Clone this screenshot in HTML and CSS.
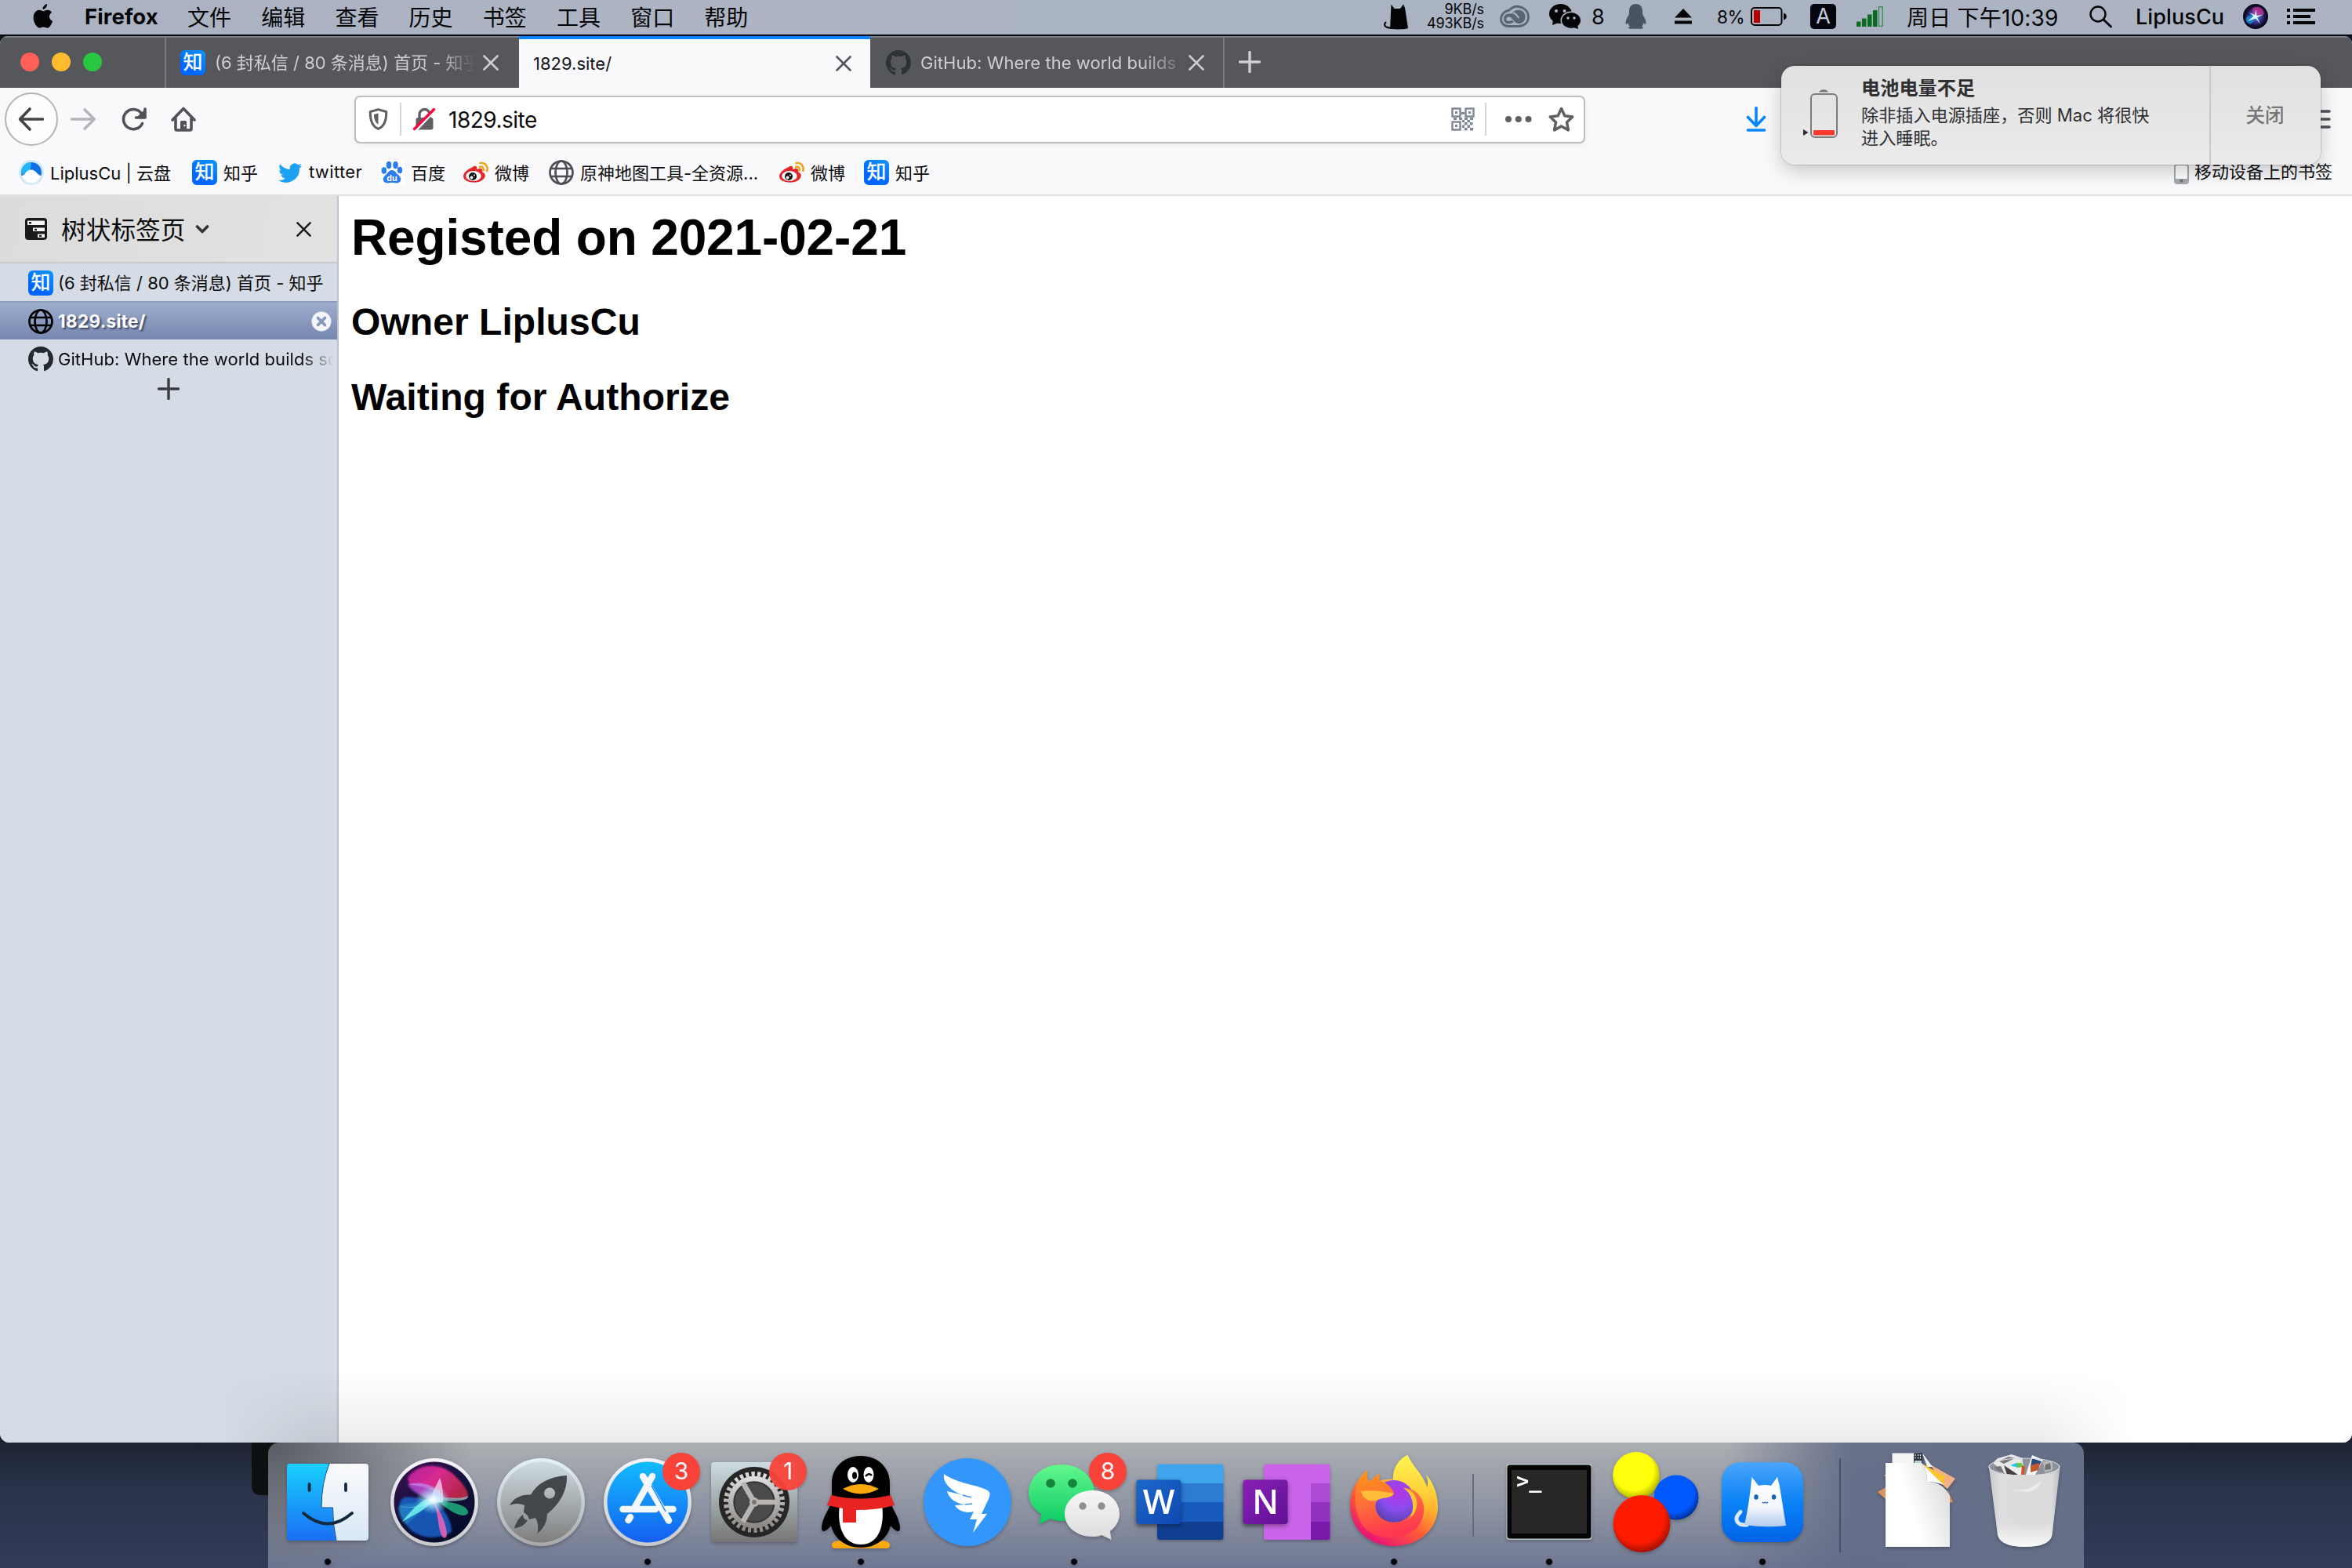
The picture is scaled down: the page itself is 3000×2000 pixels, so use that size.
FILE: index.html
```html
<!DOCTYPE html>
<html lang="zh-CN">
<head>
<meta charset="utf-8">
<title>1829.site/</title>
<link rel="stylesheet" href="styles.css">
</head>
<body>
<svg class="defs" width="0" height="0" aria-hidden="true">
  <defs>
    <symbol id="close" viewBox="0 0 20 20"><path d="M1.500 1.500L18.500 18.500M18.500 1.500L1.500 18.500" fill="none" stroke="currentColor" stroke-width="2.600" stroke-linecap="round"/></symbol>
    <symbol id="plus" viewBox="0 0 28 28"><path d="M14 1.500V26.500M1.500 14H26.500" fill="none" stroke="currentColor" stroke-width="3.400" stroke-linecap="round"/></symbol>
    <symbol id="github" viewBox="0 0 16 16"><path fill="currentColor" d="M8 0C3.580 0 0 3.580 0 8c0 3.540 2.290 6.530 5.470 7.590.4.070.550-.170.550-.380 0-.190-.010-.820-.010-1.490-2.010.370-2.530-.490-2.690-.940-.090-.230-.480-.940-.820-1.130-.280-.150-.680-.520-.010-.530.630-.010 1.080.580 1.230.820.720 1.210 1.870.870 2.330.660.070-.520.280-.870.510-1.070-1.780-.2-3.640-.890-3.640-3.950 0-.870.310-1.590.820-2.150-.080-.2-.360-1.020.080-2.120 0 0 .670-.210 2.200.820.640-.180 1.320-.270 2-.270s1.360.090 2 .270c1.530-1.040 2.200-.820 2.200-.820.440 1.100.160 1.920.080 2.120.510.560.820 1.270.820 2.150 0 3.070-1.870 3.750-3.650 3.950.290.250.540.730.540 1.480 0 1.070-.010 1.930-.010 2.200 0 .210.150.460.550.380A8.010 8.010 0 0 0 16 8c0-4.420-3.580-8-8-8z"/></symbol>
    <symbol id="globe" viewBox="0 0 32 32"><g fill="none" stroke="currentColor" stroke-width="2.700"><circle cx="16" cy="16" r="14.500"/><ellipse cx="16" cy="16" rx="7.500" ry="14.500"/><path d="M3 11H29M3 21H29"/></g></symbol>
    <symbol id="weibo" viewBox="0 0 32 32">
      <path fill="#e6252b" d="M11 9.500c3-2.300 6.500-2.500 6.300 1.200 0 .8-.1 1-.3 1.500 3.500-1.700 6.800-1.400 7.300.8.200.9 0 1.700-.3 2.500 2.500.7 3.800 2.400 3.800 4.600 0 4.700-6.300 8.700-13.800 8.700C6.500 28.800 0 26 0 20.800 0 16.500 6 11.500 11 9.500z"/>
      <ellipse cx="13" cy="20.500" rx="9.800" ry="6.400" fill="#fff"/><circle cx="12" cy="21" r="5" fill="#111"/><circle cx="10.500" cy="22.500" r="1.900" fill="#fff"/><circle cx="14" cy="19.500" r="1" fill="#fff"/>
      <path d="M21.500 4c5.500-1.300 10.500 3.800 8.800 10M21 8.800c3-.8 5.300 1.600 4.600 4.400" fill="none" stroke="#f7a21b" stroke-width="2.600" stroke-linecap="round"/>
    </symbol>
    <radialGradient id="siriBg"><stop offset="0" stop-color="#48a7d6"/><stop offset=".5" stop-color="#3b3c9c"/><stop offset=".85" stop-color="#1b1446"/><stop offset="1" stop-color="#0a0722"/></radialGradient>
  </defs>
</svg>

<header class="menubar">
  <svg class="apple" viewBox="0 0 26 32"><path fill="#050507" d="M18.200 0c.2 2.700-2.200 6.900-5.700 7C12 4 15.300.4 18.200 0zM13.300 9.200c1.100 0 3-1.500 5.400-1.400 2.200.1 4.100 1.100 5.400 2.900-4.600 2.900-3.900 9.300 1 11.300-1 2.900-3.600 8.700-6.500 8.700-1.900 0-2.800-1.200-5.100-1.200s-3.300 1.200-5 1.200C4.700 30.700.6 23.400.6 17.600c0-6.500 4-9.800 7.600-9.800 2.200 0 3.900 1.400 5.100 1.400z"/></svg>
  <b class="app">Firefox</b>
  <nav class="menus"><span>文件</span><span>编辑</span><span>查看</span><span>历史</span><span>书签</span><span>工具</span><span>窗口</span><span>帮助</span></nav>
  <div class="status">
    <svg class="s-cat" viewBox="0 0 32 32"><path fill="#050507" d="M9 32 10.500 0.500 14.500 6H22L26 .5 28 5 32 31C26 33 14 32.500 9 32z"/><path d="M4 23c-3.500 3-2.500 7.500 6 7.500" fill="none" stroke="#050507" stroke-width="2"/></svg>
    <div class="net"><span>9KB/s</span><span>493KB/s</span></div>
    <svg class="s-cc" viewBox="0 0 38 28"><path d="M12 6C18 0 24 .5 29 3c5 2.500 7.500 7 7.500 11.500C36.500 22 31 26.500 24 26.500H11C5.500 26.500 1.500 22.500 1.500 17.500 1.500 11.500 6 7 12 6z" fill="none" stroke="#5b6473" stroke-width="2.800"/><path fill="#5b6473" d="M15 10.500C20 3 32.500 4.500 32.500 14.500 32.500 20 29 23 24 23c-2.500 0-4.500-1.500-6.500-4-2-2.600-3.500-4.500-6-4.500-4 0-4.500 5.500 0 5.500 2 0 3-.8 4-1.500l2.300 2.800C16 22.500 14 23.200 11 23.200 3 23.200 3 10.500 11.500 10.500z"/><path d="M17.500 9.500c3 .5 4.500 3.500 6.500 6" fill="none" stroke="#adb5c4" stroke-width="2" stroke-linecap="round"/></svg>
    <svg class="s-wx" viewBox="0 0 40 32"><ellipse cx="14.500" cy="12.500" rx="14.500" ry="12.500" fill="#050507"/><path fill="#050507" d="M5 20 4 27l8-3z"/><ellipse cx="28" cy="21" rx="13.500" ry="11.500" fill="#adb5c4"/><ellipse cx="28" cy="21" rx="12" ry="10" fill="#050507"/><path fill="#050507" d="M31 30l6 2-1-6z"/><g fill="#adb5c4"><circle cx="9" cy="9" r="2"/><circle cx="19.500" cy="9" r="2"/><circle cx="24" cy="18" r="1.700"/><circle cx="32" cy="18" r="1.700"/></g></svg>
    <span class="s-count">8</span>
    <svg class="s-qq" viewBox="0 0 26 32"><path fill="#4a5361" d="M13 0c6 0 8.500 4.500 8.500 9 0 2 0 3 .5 5 2 3 4 7 4 10.500-.3 2.500-2 1-3-.5-.5 2-1.200 3.500-2.500 4.800 3 1.400 2 3-1.500 3H7c-3.500 0-4.500-1.600-1.500-3C4.200 27.500 3.500 26 3 24c-1 1.500-2.700 3-3 .5C0 21 2 17 4 14c.5-2 .5-3 .5-5C4.500 4.500 7 0 13 0z"/></svg>
    <svg class="s-eject" viewBox="0 0 22 20"><path fill="#050507" d="M11 0 22 11.500H0zM0 15.500H22V19.500H0z"/></svg>
    <span class="s-pct">8%</span>
    <svg class="s-bat" viewBox="0 0 46 24"><rect x="1" y="1" width="38.500" height="22" rx="4" fill="none" stroke="#050507" stroke-width="2"/><rect x="4" y="4" width="8" height="16" fill="#b80000"/><path fill="#050507" d="M42 7.500c5 1 5 8 0 9z"/></svg>
    <span class="s-ime">A</span>
    <svg class="s-sig" viewBox="0 0 34 26"><g fill="#0b6b22"><rect x="0" y="19.500" width="5.500" height="6.500"/><rect x="7" y="15.500" width="5.500" height="10.500"/><rect x="14" y="10.500" width="5.500" height="15.500"/><rect x="21" y="5" width="5.500" height="21"/></g><rect x="28.500" y=".8" width="4.700" height="24.500" fill="none" stroke="#2c8446" stroke-width="1.200"/></svg>
    <span class="s-clock">周日 下午10:39</span>
    <svg class="s-find" viewBox="0 0 30 28"><circle cx="11" cy="11" r="9.500" fill="none" stroke="#050507" stroke-width="2.400"/><path d="M18 18l9.500 9" stroke="#050507" stroke-width="3" stroke-linecap="round"/></svg>
    <span class="s-user">LiplusCu</span>
    <svg class="s-siri" viewBox="0 0 32 32"><circle cx="16" cy="16" r="16" fill="#0b0820"/><circle cx="16" cy="16" r="14" fill="url(#siriBg)"/><path fill="#e0359a" opacity=".65" d="M16 16C8 8 12 3 20 4c5 1 8 6 6 10-3 2-7 1-10 2z"/><path fill="#1b8fe0" opacity=".8" d="M16 16C8 12 2 16 4 22c3 5 8 6 12-6z"/><path fill="#d9fbff" d="M16.500 7l1 8 8-1-7.500 3.200 4 8-6-6.700L6 22l7.500-6.500L8 11l7 3z"/></svg>
    <svg class="s-list" viewBox="0 0 36 20"><path fill="#050507" d="M0 0H4V4H0zM0 8H4V12H0zM0 16H4V20H0zM8 0H36V4H8zM8 8H30V12H8zM8 16H36V20H8z"/></svg>
  </div>
</header>

<main class="window">
  <div class="titlebar">
    <div class="lights"><i class="red"></i><i class="yellow"></i><i class="green"></i></div>
    <div class="tab tab-a"><span class="zhi">知</span><span class="label">(6 封私信 / 80 条消息) 首页 - 知乎</span><svg class="x"><use href="#close"/></svg></div>
    <div class="tab tab-b"><span class="label">1829.site/</span><svg class="x"><use href="#close"/></svg></div>
    <div class="tab tab-c"><svg class="fav"><use href="#github"/></svg><span class="label">GitHub: Where the world builds software</span><svg class="x"><use href="#close"/></svg></div>
    <svg class="newtab"><use href="#plus"/></svg>
  </div>

  <div class="toolbar">
    <span class="back"><svg width="34" height="30" viewBox="0 0 34 30"><path d="M31.500 15H3M15 2 2.500 15 15 28" fill="none" stroke="#444448" stroke-width="3.600" stroke-linecap="round" stroke-linejoin="round"/></svg></span>
    <svg class="fwd" viewBox="0 0 32 28"><path d="M1.500 14H30M18 1.800 30.200 14 18 26.200" fill="none" stroke="#b5b5b9" stroke-width="3.400" stroke-linecap="round" stroke-linejoin="round"/></svg>
    <svg class="reload" viewBox="0 0 32 30"><path d="M26.500 20.500A12.600 12.600 0 1 1 25.500 8" fill="none" stroke="#515156" stroke-width="3.600" stroke-linecap="round"/><path d="M30 2V13H18.500" fill="none" stroke="#515156" stroke-width="3.600" stroke-linecap="round" stroke-linejoin="round"/><path fill="#515156" d="M29 3V12H20z"/></svg>
    <svg class="home" viewBox="0 0 32 32"><path d="M2 17 16 2.500 30 17M6 15V28.500Q6 30 7.500 30H24.500Q26 30 26 28.500V15" fill="none" stroke="#515156" stroke-width="3.600" stroke-linecap="round" stroke-linejoin="round"/><path fill="#515156" d="M12 30V19.500Q12 18 13.500 18H18.500Q20 18 20 19.500V30z"/><rect x="16.500" y="23" width="1.800" height="2.200" fill="#f9f9fb"/></svg>
    <div class="urlbar">
      <svg class="shield" viewBox="0 0 24 28"><path d="M12 1.600 22.200 4.500C22.500 15 20 23 12 26.400 4 23 1.500 15 1.800 4.500z" fill="none" stroke="#606064" stroke-width="3" stroke-linejoin="round"/><path fill="#606064" d="M12 6.500V21C8 18 6.500 14 6.500 8z"/></svg>
      <i class="rule"></i>
      <svg class="lock" viewBox="0 0 28 28"><path d="M8 14V8a6.500 6.500 0 0 1 13 0V14" fill="none" stroke="#606064" stroke-width="3.400"/><rect x="3.500" y="12" width="22" height="15.500" rx="3" fill="#606064"/><path d="M3.500 28.500 29 1.500" stroke="#fff" stroke-width="3"/><path d="M1.500 26.500 26.500 1.500" stroke="#f8043f" stroke-width="3.400" stroke-linecap="round"/></svg>
      <span class="url">1829.site</span>
      <svg class="qr" viewBox="0 0 30 30"><g fill="none" stroke="#7d8794" stroke-width="2.400"><rect x="1.500" y="1.500" width="10" height="10"/><rect x="18.500" y="1.500" width="10" height="10"/><rect x="1.500" y="18.500" width="10" height="10"/></g><path fill="#7d8794" d="M5 5h3v3H5zM22 5h3v3h-3zM5 22h3v3H5zM13 6h4v3h-4zM3 13h4v3H3zM10 13h4v3h-4zM17 13h4v3h-4zM24 13h4v3h-4zM14 16h3v3h-3zM20.500 16h3.500v3h-3.500zM17 19h3.500v3.500H17zM24 19h3.500v3.500H24zM14 22.500h3v3.500h-3zM20.500 22.500H24V26h-3.500zM17 26h3.500v3.500H17zM24 26h4v3.500h-4z"/></svg>
      <i class="rule"></i>
      <svg class="dots" viewBox="0 0 34 8"><g fill="#606064"><circle cx="4" cy="4" r="4"/><circle cx="16.800" cy="4" r="4"/><circle cx="29.500" cy="4" r="4"/></g></svg>
      <svg class="star" viewBox="0 0 32 32"><path d="M16 2.500 20.200 11.300 29.800 12.600 22.800 19.300 24.600 29 16 24.300 7.400 29 9.200 19.300 2.200 12.600 11.800 11.300z" fill="none" stroke="#606064" stroke-width="3.400" stroke-linejoin="round"/></svg>
    </div>
    <svg class="down" viewBox="0 0 26 32"><path d="M13 1.500V24M2.500 13.500 13 24.500 23.500 13.500M2.500 30H23.500" fill="none" stroke="#0a84ff" stroke-width="3.600" stroke-linecap="round" stroke-linejoin="round"/></svg>
    <svg class="burger" viewBox="0 0 28 24"><path d="M2 2H26M2 12H26M2 22H26" stroke="#515156" stroke-width="3.600" stroke-linecap="round"/></svg>
  </div>

  <div class="bookmarks">
    <a style="width:221px"><svg viewBox="0 0 32 32"><circle cx="16" cy="16" r="16" fill="#cfe9f8"/><circle cx="16" cy="16" r="13" fill="#0e6fe8"/><path fill="#23b6f5" d="M3 18C3 8 9 2.500 16 3c-1 5 0 9-4 13z"/><path fill="#fff" d="M3.500 20C8 20 9 12.500 15.500 12.500 22 12.500 24 20 28.500 20 26 27 21 29.500 16 29.500S5.500 26.500 3.500 20z"/></svg><span>LiplusCu | 云盘</span></a>
    <a style="width:109px"><span class="zhi">知</span><span>知乎</span></a>
    <a style="width:130px"><svg viewBox="0 0 32 32"><path fill="#1da1f2" d="M31 7.200c-1.100.5-2.300.8-3.500 1 1.300-.8 2.200-2 2.700-3.400-1.200.7-2.500 1.200-3.900 1.500A6.200 6.200 0 0 0 15.800 12C10.700 11.700 6.200 9.300 3.100 5.500c-1.600 2.800-.8 6.400 1.900 8.200-1 0-2-.3-2.800-.8 0 2.900 2 5.500 4.900 6.200-.9.200-1.800.3-2.700.1.800 2.500 3 4.200 5.700 4.300A12.400 12.400 0 0 1 1 26a17.500 17.500 0 0 0 27-15.600c1.200-.9 2.200-2 3-3.200z"/></svg><span class="tw">twitter</span></a>
    <a style="width:107px"><svg viewBox="0 0 32 32"><path fill="#fff" d="M0 0H32V32H0z"/><g fill="#2b7cf0"><ellipse cx="12" cy="6.500" rx="3.300" ry="4.700"/><ellipse cx="20.500" cy="6.500" rx="3.300" ry="4.700"/><ellipse cx="5.800" cy="13.500" rx="3.200" ry="4.200"/><ellipse cx="26" cy="13" rx="3.200" ry="4.200"/><path d="M16 13c4 0 5 4 8 6 5.500 4.500 3.500 10.500-2 10.500-2.500 0-3.500-.5-6-.5s-3.500.5-6 .5C4.500 29.500 2.500 23.500 8 19c3-2.500 4-6 8-6z"/></g><text x="16" y="27" class="du">du</text></svg><span>百度</span></a>
    <a style="width:109px"><svg><use href="#weibo"/></svg><span>微博</span></a>
    <a style="width:294px" class="gray"><svg><use href="#globe"/></svg><span>原神地图工具-全资源...</span></a>
    <a style="width:108px"><svg><use href="#weibo"/></svg><span>微博</span></a>
    <a style="width:108px"><span class="zhi">知</span><span>知乎</span></a>
    <a class="mobile"><svg viewBox="0 0 19 26"><rect x="1" y="1" width="17" height="24" rx="3" fill="#fff" stroke="#a3a9b0" stroke-width="2"/><path fill="#a3a9b0" d="M1 19H18V25H1z"/><rect x="7.500" y="20" width="4" height="3.500" fill="#6c7278"/></svg><span>移动设备上的书签</span></a>
  </div>

  <div class="body">
    <aside class="sidebar">
      <div class="side-head">
        <svg class="tree" viewBox="0 0 28 28"><rect width="28" height="28" rx="4" fill="#1a1a1a"/><path fill="#f4f4f4" d="M3 3.500H25V9H3zM10 12.500H25V17H10zM16 20.500H25V25H16z"/><path fill="#1a1a1a" d="M5 5h3v2.500H5zM12 13.700h3v2.200h-3zM18 21.700h3v2.200h-3z"/></svg>
        <span>树状标签页</span>
        <svg class="chev" viewBox="0 0 18 11"><path d="M2.500 2 9 8.500 15.500 2" fill="none" stroke="#333" stroke-width="3.600" stroke-linecap="round" stroke-linejoin="round"/></svg>
        <svg class="side-x"><use href="#close"/></svg>
      </div>
      <div class="row"><span class="zhi">知</span><span class="txt zh">(6 封私信 / 80 条消息) 首页 - 知乎</span></div>
      <div class="row current"><svg class="fav"><use href="#globe"/></svg><b class="txt">1829.site/</b><svg class="pill" viewBox="0 0 26 26"><circle cx="13" cy="13" r="12.500" fill="#f3f5fa"/><path d="M8.500 8.500 17.500 17.500M17.500 8.500 8.500 17.500" stroke="#8796bb" stroke-width="3.600" stroke-linecap="round"/></svg></div>
      <div class="row last"><svg class="fav"><use href="#github"/></svg><span class="txt fade">GitHub: Where the world builds software</span></div>
      <div class="add"><svg><use href="#plus"/></svg></div>
    </aside>
    <article class="page">
      <h1>Registed on 2021-02-21</h1>
      <h2>Owner LiplusCu</h2>
      <h2>Waiting for Authorize</h2>
    </article>
  </div>
  <div class="dock-shade"></div>
</main>

<section class="notice">
  <svg class="n-bat" viewBox="0 0 46 64"><path fill="#7c7c7e" d="M21 4.500C22 0 32 0 33 4.500z"/><rect x="11" y="7" width="33" height="55" rx="5" fill="none" stroke="#7c7c7e" stroke-width="2"/><rect x="14" y="53" width="27" height="6.500" rx="1" fill="#fb3b2b"/><path fill="#2b2b2b" d="M1 52 7.500 56 1 60z"/></svg>
  <div class="n-text"><strong>电池电量不足</strong><p>除非插入电源插座，否则 Mac 将很快<br>进入睡眠。</p></div>
  <div class="n-close">关闭</div>
</section>

<div class="behind"></div>
<footer class="dock">
  <svg class="on" viewBox="0 0 136 160">
    <defs><linearGradient id="fb" x2="0" y2="1"><stop stop-color="#18d0ff"/><stop offset="1" stop-color="#1a6ef5"/></linearGradient><linearGradient id="fw" x2="0" y2="1"><stop stop-color="#fafafc"/><stop offset="1" stop-color="#d9e8f6"/></linearGradient></defs>
    <rect x="16" y="27" width="104" height="98" rx="4" fill="url(#fb)"/><path fill="url(#fw)" d="M70 27H116Q120 27 120 31V121Q120 125 116 125H79Q74.500 105 74.500 83H60Q60 52 70 27z"/><path d="M70 27Q60 52 60 83H74.500Q74.500 105 79 125" fill="none" stroke="#1e4f88" stroke-width="1"/><path d="M44.600 53V61M91 53V61M37 90Q68 117 99 90" fill="none" stroke="#13293f" stroke-width="3.800" stroke-linecap="round"/>
  </svg>
  <svg viewBox="0 0 136 160">
    <defs><radialGradient id="sg"><stop stop-color="#fff"/><stop offset=".3" stop-color="#cff6ff" stop-opacity=".85"/><stop offset="1" stop-color="#8ef" stop-opacity="0"/></radialGradient><linearGradient id="ring" x2="0" y2="1"><stop stop-color="#f6f4f8"/><stop offset="1" stop-color="#c9c9cc"/></linearGradient><linearGradient id="sm" x2=".6" y2="1"><stop stop-color="#42104f"/><stop offset=".5" stop-color="#161240"/><stop offset="1" stop-color="#050c2a"/></linearGradient>
    <linearGradient id="s1" x2="1" y2=".5"><stop stop-color="#b0219c"/><stop offset=".5" stop-color="#d92a92"/><stop offset="1" stop-color="#b32847"/></linearGradient>
    <filter id="soft"><feGaussianBlur stdDeviation="1.300"/></filter></defs>
    <circle cx="68" cy="76" r="56" fill="url(#ring)"/><circle cx="68" cy="76" r="51.500" fill="url(#sm)"/>
    <g filter="url(#soft)"><path fill="url(#s1)" d="M66 73C46 66 26 50 38 40c16-16 44-12 58 4 14 14 20 26 10 28z"/><path fill="#1a5cc0" opacity=".9" d="M66 73C44 74 20 58 24 88c6 22 22 32 40 33 12 0 24-4 26-8 0-14-10-30-24-40z"/><path fill="#2fa6d8" opacity=".45" d="M66 73C50 78 30 76 22 82c0 10 4 18 10 22 12-10 24-20 34-31z"/><path fill="#a04fd0" opacity=".75" d="M66 74C54 70 40 64 34 54c14-6 34-2 48 18z"/></g>
    <path fill="#d7a6ea" opacity=".45" d="M34 54C50 48 72 54 82 72 72 62 52 54 34 54z"/>
    <path fill="#9fe8e0" opacity=".6" d="M22 80C36 86 54 80 66 71 80 68 100 74 111 68 112 74 98 75 84 75 60 78 36 88 22 80z"/>
    <path fill="#1fae7c" opacity=".85" d="M72 74C92 76 112 80 111 90c-6 9-26-4-39-16z"/><path fill="#f263b4" opacity=".85" d="M66 74C74 90 72 112 79 121c5 3 6-4 4-12C79 94 74 84 66 74z"/><path fill="#6ff5ef" opacity=".85" d="M27 101C42 82 54 70 70 70 58 86 42 92 27 101z"/><path fill="#ffd6f2" opacity=".75" d="M60 76 75 45Q80 58 79 76z"/><ellipse cx="66" cy="73" rx="22" ry="18" fill="url(#sg)"/>
  </svg>
  <svg viewBox="0 0 136 160">
    <defs><linearGradient id="lp" x2="0" y2="1"><stop stop-color="#cfdde2"/><stop offset="1" stop-color="#7e7e7e"/></linearGradient><linearGradient id="lr" x2="0" y2="1"><stop stop-color="#e4f3f8"/><stop offset="1" stop-color="#a8a8a8"/></linearGradient></defs>
    <circle cx="68" cy="76" r="56" fill="url(#lr)"/><circle cx="68" cy="76" r="51.500" fill="url(#lp)"/><path fill="#43464a" fill-rule="evenodd" d="M101 42Q102 70 76 91Q76 106 63.500 116Q66 104 61 96L53 98 51 93 46 89 47 80Q38 76 28 80Q36 66 55 66.500Q68 44 101 42zM79 57.500a7 7 0 1 0 .1 0zM45 92Q45 98 51 99Q46 108 34 109.500Q37 98 45 92z"/>
  </svg>
  <svg class="on" viewBox="0 0 136 160">
    <defs><linearGradient id="as" x2="0" y2="1"><stop stop-color="#12bcff"/><stop offset="1" stop-color="#155ff0"/></linearGradient></defs>
    <circle cx="68" cy="76" r="56" fill="url(#ring)"/><circle cx="68" cy="76" r="51.500" fill="url(#as)"/><g stroke="#f4f7fb" stroke-width="8.500" stroke-linecap="round"><path d="M36.500 85H78M90 85H100.500M74 43 52 82M62 43 95 99.500M46 95 43.500 99"/></g><path d="M73 55 91 88" stroke="#1588f8" stroke-width="1.500"/>
    <circle cx="111" cy="37" r="24" fill="#f9433a"/><text x="111" y="46.500" class="badge">3</text>
  </svg>
  <svg viewBox="0 0 136 160">
    <defs><linearGradient id="sp" x2="0" y2="1"><stop stop-color="#cddce1"/><stop offset="1" stop-color="#767676"/></linearGradient><linearGradient id="gr" x2="0" y2="1"><stop stop-color="#dcdcdc"/><stop offset="1" stop-color="#8e8a86"/></linearGradient></defs>
    <rect x="13" y="25" width="110" height="102" rx="4" fill="url(#sp)"/><circle cx="68" cy="76" r="45" fill="#262626"/><circle cx="68" cy="76" r="36" fill="none" stroke="url(#gr)" stroke-width="6" stroke-dasharray="4.200 3.340"/><circle cx="68" cy="76" r="30" fill="#4a4a4a" stroke="url(#gr)" stroke-width="6.500"/><circle cx="68" cy="76" r="25.500" fill="none" stroke="#333" stroke-width="1.500"/><g stroke="#b8b5b2" stroke-width="6.500"><path d="M68 76H97M68 76 53.500 51M68 76 53.500 101"/></g><circle cx="68" cy="76" r="6" fill="#b8b5b2"/><circle cx="68" cy="76" r="3" fill="#777"/>
    <circle cx="111" cy="37" r="24" fill="#f9433a" opacity=".95"/><text x="111" y="46.500" class="badge">1</text>
  </svg>
  <svg class="on" viewBox="0 0 136 160">
    <path fill="#fba90a" d="M31 131C31 124 44 124 60 128H76C92 124 105 124 105 131 105 135 102 135 98 135H38C34 135 31 135 31 131z"/>
    <path fill="#000" d="M68 17C90 17 105 32 105 52V68L108 82C113 92 118 100 118 110 117 116 111 112 106 106 102 122 88 134 68 134S34 122 30 106C25 112 19 116 18 110 18 100 23 92 28 82L31 68V52C31 32 46 17 68 17z"/>
    <path fill="#fff" d="M41 80H95C98 100 94 130 68 130S38 100 41 80z"/><path fill="#e92222" d="M30 67Q68 76 106 67L111 80Q90 86 62 86V102H45V84Q34 82 25 80z"/>
    <ellipse cx="58" cy="41" rx="7" ry="10" fill="#fff"/><ellipse cx="78" cy="41" rx="6.500" ry="10" fill="#fff"/><ellipse cx="60" cy="42" rx="3" ry="4.500" fill="#000"/><path d="M74 43Q78 38 82 42" fill="none" stroke="#000" stroke-width="2.400"/><path fill="#fba90a" d="M45 59Q68 47 91 59Q68 72 45 59z"/>
  </svg>
  <svg viewBox="0 0 136 160"><circle cx="68" cy="76" r="56" fill="#3296fa"/><path fill="#fff" d="M38 40C54 52 80 54 92 60 98 63 97 67 95 72L86 91H93L75 115 80 98H71L76 88C66 91 56 87 52 80L65 79C52 78 44 70 42 62L62 67C48 62 36 52 38 40z"/><path d="M65 79 74 78M62 67 73 70" stroke="#3296fa" stroke-width="1.500"/></svg>
  <svg class="on" viewBox="0 0 136 160">
    <defs><linearGradient id="wx" x2="0" y2="1"><stop stop-color="#62f78e"/><stop offset="1" stop-color="#0ccb63"/></linearGradient><linearGradient id="ww" x2="0" y2="1"><stop stop-color="#f6f6f6"/><stop offset="1" stop-color="#dcdcdc"/></linearGradient></defs>
    <path fill="url(#wx)" d="M52 28C76 28 94 44 94 64S76 100 52 100C46 100 42 99 38 97L24 104 26 91C15 84 10 75 10 64 10 44 28 28 52 28z"/><circle cx="38" cy="52" r="5.800" fill="#14833c"/><circle cx="66" cy="52" r="5.800" fill="#14833c"/>
    <path fill="url(#ww)" d="M91 61C111 61 126 74 126 91 126 100 121 108 114 113L115.500 124 103 118C99 120 95 120 91 120 71 120 56 107 56 91S71 61 91 61z"/><circle cx="79" cy="81" r="4.700" fill="#8f8f8f"/><circle cx="103" cy="81" r="4.700" fill="#8f8f8f"/>
    <circle cx="111" cy="37" r="24" fill="#f9433a"/><text x="111" y="46.500" class="badge">8</text>
  </svg>
  <svg viewBox="0 0 136 160">
    <defs><linearGradient id="wd" x2="1" y2="1"><stop stop-color="#1c68cb"/><stop offset="1" stop-color="#0f47b0"/></linearGradient><clipPath id="oc"><rect x="38" y="27.500" width="84.500" height="96.500" rx="3.500"/></clipPath></defs>
    <g clip-path="url(#oc)"><path fill="#41a5ee" d="M38 27H123V52H38z"/><path fill="#2b7cd3" d="M38 52H123V76H38z"/><path fill="#185abd" d="M38 76H123V101H38z"/><path fill="#103f91" d="M38 101H123V125H38z"/></g><rect class="lift" x="11.500" y="47.500" width="57" height="56.500" rx="4" fill="url(#wd)"/><text x="40" y="91" class="office">W</text>
  </svg>
  <svg viewBox="0 0 136 160">
    <defs><linearGradient id="on" x2="1" y2="1"><stop stop-color="#8a20b8"/><stop offset="1" stop-color="#5f1094"/></linearGradient></defs>
    <g clip-path="url(#oc)"><path fill="#ca64ea" d="M38 27H123V125H38z"/><path fill="#ae4bd5" d="M98 52H123V76H98z"/><path fill="#9332bf" d="M98 76H123V101H98z"/><path fill="#7719aa" d="M98 101H123V125H98z"/></g><rect class="lift" x="11.500" y="47.500" width="57" height="56.500" rx="4" fill="url(#on)"/><text x="40" y="91" class="office">N</text>
  </svg>
  <svg class="on" viewBox="0 0 136 160">
    <defs><linearGradient id="ff" x1=".85" y1=".1" x2=".3" y2="1"><stop stop-color="#fff44f"/><stop offset=".35" stop-color="#ffb52e"/><stop offset=".65" stop-color="#ff5a36"/><stop offset="1" stop-color="#e8107a"/></linearGradient><linearGradient id="fo" x2=".2" y2="1"><stop stop-color="#ff980e"/><stop offset=".5" stop-color="#ff7139"/><stop offset="1" stop-color="#ff3750"/></linearGradient><radialGradient id="fp" cx=".6" cy=".3" r=".8"><stop stop-color="#b833e1"/><stop offset=".5" stop-color="#8a4cf0"/><stop offset="1" stop-color="#4c3f9e"/></radialGradient><linearGradient id="fy" x2="0" y2="1"><stop stop-color="#fff44f"/><stop offset=".5" stop-color="#ffd13a"/><stop offset="1" stop-color="#ff8a20"/></linearGradient></defs>
    <path fill="url(#ff)" d="M34 35Q32 43 36 50 43 46 48 39 50 45 49 49 58 46 68 47C66 33 74 21 85.500 16 92 32 104 38 110 58 112 52 111 46 109 41 118 50 124 66 124 82 124 112 98 132 68 132 36 132 12 110 12 80 12 60 22 46 34 35z"/>
    <path fill="url(#fy)" d="M67 47C66 33 74 21 85.500 16 92 32 106 40 112 62 118 86 104 108 82 112 96 98 96 72 67 47z"/>
    <circle cx="68" cy="75" r="27" fill="url(#fp)"/>
    <path fill="url(#fo)" d="M34 35Q32 43 36 50 43 46 48 39 50 45 49 49C57 49 66 58 68 65 64 72 54 69 48 73 42 77 44 88 50 95 60 105 80 104 90 92 98 80 94 64 80 58 104 58 112 84 102 102 92 122 50 130 30 108 16 92 12 52 34 35z"/>
    <path fill="#ffbd3a" d="M26 62C38 60 54 62 68 65 64 72 54 69 45 74 34 76 28 70 26 62z"/>
    <path fill="#ffc933" d="M80 58C98 60 104 84 88 97 96 82 92 66 80 58z"/>
  </svg>
  <i class="sep short"></i>
  <svg class="on" viewBox="0 0 136 160"><rect x="13.500" y="27" width="109" height="97" rx="4" fill="#b9cbd2"/><rect x="14.500" y="28.500" width="107" height="94" rx="3.500" fill="#050505"/><rect x="20" y="35" width="96" height="81" fill="#262626"/><text x="26" y="58" class="term">&gt;_</text></svg>
  <svg viewBox="0 0 136 160">
    <defs><radialGradient id="by" cx=".45" cy=".4" r=".6"><stop offset=".7" stop-color="#ffff0c"/><stop offset="1" stop-color="#b0b000"/></radialGradient><radialGradient id="bb" cx=".45" cy=".4" r=".62"><stop offset=".7" stop-color="#0058ff"/><stop offset="1" stop-color="#002c92"/></radialGradient><radialGradient id="br" cx=".45" cy=".4" r=".62"><stop offset=".7" stop-color="#ff1b00"/><stop offset="1" stop-color="#9c1000"/></radialGradient></defs>
    <circle cx="43" cy="42" r="30" fill="url(#by)"/><circle cx="94" cy="70" r="28.500" fill="url(#bb)"/><circle cx="50" cy="103.500" r="36.500" fill="url(#br)"/>
  </svg>
  <svg class="on" viewBox="0 0 136 160">
    <defs><linearGradient id="cl" x2="0" y2="1"><stop stop-color="#4aa5fb"/><stop offset=".5" stop-color="#0b82f6"/><stop offset="1" stop-color="#0063e6"/></linearGradient><linearGradient id="ct" x2="0" y2="1"><stop stop-color="#fff"/><stop offset=".6" stop-color="#f4f7fc"/><stop offset="1" stop-color="#b4cbef"/></linearGradient></defs>
    <rect x="16" y="25" width="104" height="102" rx="24" fill="url(#cl)"/><path d="M48 105C36 106 30 98 40 88.500" fill="none" stroke="#dce8f8" stroke-width="5" stroke-linecap="round"/><path fill="url(#ct)" d="M54.500 44 63 55Q71 53 79 55L87 44 90 56 98 106Q72 109 45 105Q51 80 54.500 44z"/><ellipse cx="60" cy="69.500" rx="2.700" ry="3.200" fill="#1464b8"/><ellipse cx="82.600" cy="69.500" rx="2.700" ry="3.200" fill="#1464b8"/><path d="M68 76Q70 78 71.500 76Q73 78 75 76" fill="none" stroke="#1464b8" stroke-width="1.200"/>
  </svg>
  <i class="sep"></i>
  <svg viewBox="0 0 136 160">
    <defs><linearGradient id="pg" x1="1" x2=".3" y2=".3"><stop stop-color="#d6d6d6"/><stop offset="1" stop-color="#fff"/></linearGradient></defs>
    <path fill="#e0925c" d="M29 57 19 63 30 73zM27 41H31V46z"/><path fill="#f4b183" d="M86 28 118 46 108 59 104 56z"/><path fill="#e0925c" d="M108 60 115 76 110 77z"/><path fill="#f4f4f4" d="M37.500 13.500H70V27H37.500z"/><path fill="#2c323a" d="M65 13.500H76V26H65z"/><path d="M67 15V22M70.500 15V21M73.500 15V21" stroke="#e8eef4" stroke-width="1.200" stroke-dasharray="2 1.500"/><path fill="#b9d3dd" d="M66 23H75V26H66z"/><path fill="#f1f1f1" d="M76 13.500 89 31 82 31z"/><path fill="#fdc62e" d="M76 27 104 43V54L90 45z"/><path fill="url(#pg)" d="M29 26H75Q82 34 82 50 102 50 111 68V133H29z"/><path fill="#fbfbfb" d="M75 26Q82 34 82 50 94 50 104 54.500 90 42 75 26z"/>
  </svg>
  <svg viewBox="0 0 136 160">
    <defs><linearGradient id="tr" x2="1"><stop stop-color="#c6c8cd"/><stop offset=".15" stop-color="#dedee0"/><stop offset=".5" stop-color="#dadad9"/><stop offset=".88" stop-color="#dcdcdd"/><stop offset="1" stop-color="#b9bcc3"/></linearGradient><linearGradient id="tb" x2="0" y2="1"><stop offset=".7" stop-color="#fff" stop-opacity="0"/><stop offset="1" stop-color="#fff" stop-opacity=".85"/></linearGradient></defs>
    <ellipse cx="70" cy="31" rx="45" ry="11" fill="#8d929d"/>
    <path fill="#e6e6e6" d="M30 26 36 20 54 15 68 20 66 41 46 40z"/><path fill="#77777a" d="M38 24 50 18 58 20 44 27zM32 31 40 30 44 38 36 36z"/><path fill="#473f3e" d="M44 29 62 41H48z"/><path fill="#ededed" d="M46 29 68 25 70 41H62z"/><path fill="#2bc0ee" d="M52 29 60 26 66 27 62 32z"/><path fill="#6cc83f" d="M60 26H67L68 31 62 32z"/><path fill="#d2542b" d="M67 29 71 31 70 41H66z"/><path fill="#fafafa" d="M80 16 94 22 84 41H72z"/><path fill="#2c4a7c" d="M80 20 92 24 88 32 78 30z"/><path fill="#c2592e" d="M78 29 90 26 88 35 78 38z"/><path fill="#b9b9bb" d="M94 24 106 24 106 35 96 38z"/><path fill="#727276" d="M97 28 103 26 104 34 96 35z"/>
    <path fill="url(#tr)" d="M25 32Q27 42 70 42T115.500 32L105.500 118Q102 133 71 133T36 118z"/><path fill="url(#tb)" d="M25 32Q27 42 70 42T115.500 32L105.500 118Q102 133 71 133T36 118z"/><path d="M25 31Q27 42 70 42T115 31" fill="none" stroke="#f2f2f4" stroke-width="1.200"/><ellipse cx="70" cy="31" rx="45" ry="11" fill="none" stroke="#d9dade" stroke-width="1.200"/><path fill="#f4f4f4" opacity=".7" d="M56 61Q76 62 92 49 86 63 72 63z"/>
  </svg>
</footer>
</body>
</html>
```

FILE: styles.css
```css
* { box-sizing: border-box; }
body {
  margin: 0;
  width: 3000px;
  height: 2000px;
  overflow: hidden;
  position: relative;
  font-family: Inter, "Noto Sans CJK SC", sans-serif;
  font-size: 22px;
  color: #0c0c0d;
  background: linear-gradient(#0c121e 0, #0c121e 1800px, #1c2433 1842px, #293248 1890px, #323c59 2000px);
}
svg { display: block; flex: none; overflow: visible; }
.defs { position: absolute; }
i { display: block; flex: none; }
span, b { white-space: nowrap; }

/* Menu bar */
.menubar {
  height: 46px;
  display: flex;
  align-items: center;
  padding: 0 0 2px 42px;
  border-bottom: 2px solid #050a16;
  background: linear-gradient(90deg, #abb3c3, #adb5c3 35%, #a9b3c2 65%, #adb4c3);
  color: #050507;
}
.apple { width: 26px; height: 32px; }
.app { width: 131px; margin-left: 40px; font-size: 27.500px; letter-spacing: .1px; }
.menus { display: grid; grid-template-columns: repeat(8, 94.200px); font-size: 28px; width: 1525px; }
.status { display: flex; align-items: center; height: 44px; }
.s-cat { width: 32px; height: 32px; }
.net { width: 97px; display: flex; flex-direction: column; text-align: right; font-size: 18px; line-height: 18px; letter-spacing: -.1px; }
.s-cc { width: 38px; height: 28px; margin-left: 20px; }
.s-wx { width: 40px; height: 32px; margin-left: 25px; }
.s-count { width: 16px; margin-left: 14px; font-size: 27px; }
.s-qq { width: 27px; height: 32px; margin-left: 27px; }
.s-eject { width: 22px; height: 20px; margin-left: 36px; }
.s-pct { width: 43px; margin-left: 32px; font-size: 22.500px; letter-spacing: -.4px; }
.s-bat { width: 46px; height: 24px; }
.s-ime { width: 33px; height: 32px; margin-left: 30px; border-radius: 5px; background: #050510; color: #c4cbd8; font-size: 27px; line-height: 32px; text-align: center; }
.s-sig { width: 34px; height: 26px; margin-left: 26px; }
.s-clock { width: 200px; margin-left: 30px; font-size: 28px; letter-spacing: .2px; }
.s-find { width: 30px; height: 28px; margin-left: 33px; }
.s-user { width: 113px; margin-left: 29px; font-size: 27px; font-weight: 500; letter-spacing: .1px; }
.s-siri { width: 32px; height: 32px; margin-left: 24px; }
.s-list { width: 36px; height: 20px; margin-left: 24px; }

/* Browser window */
.window { height: 1794px; border-radius: 10px 10px 12px 12px; overflow: hidden; position: relative; background: #fff; }
.titlebar { height: 66px; display: flex; background: #56575a; box-shadow: inset 0 2px #7c7f84; color: #cfcfd1; }
.lights { width: 210px; display: flex; align-items: center; gap: 16px; padding-left: 26px; }
.lights i { width: 24px; height: 24px; border-radius: 50%; }
.red { background: #ff5f57; }
.yellow { background: #febc2e; }
.green { background: #28c840; }
.zhi { width: 32px; height: 32px; flex: none; border-radius: 6px; background: linear-gradient(215deg, #0a97ff, #0066ff 70%); color: #fff; font-size: 25px; font-weight: 500; line-height: 31px; text-align: center; }
.fav { width: 32px; height: 32px; }
.tab { display: flex; align-items: center; height: 66px; padding-top: 2px; }
.tab .label { flex: none; overflow: hidden; line-height: 40px; }
.x { width: 20px; height: 20px; }
.tab-a { width: 452px; padding-left: 18px; border-left: 2px solid #77787b; }
.tab-a .label { width: 332px; margin: 0 10px 0 12px; -webkit-mask-image: linear-gradient(90deg, #000 285px, transparent 332px); mask-image: linear-gradient(90deg, #000 285px, transparent 332px); }
.tab-b { width: 448px; padding-left: 18px; background: #f9f9fb; border-top: 4px solid #0a84ff; padding-top: 0; padding-bottom: 0; color: #15151a; }
.tab-b .label { width: 386px; }
.tab-b .x { color: #55555a; }
.tab-c { width: 452px; padding-left: 20px; border-right: 2px solid #77787b; }
.tab-c .fav { color: #2d3236; }
.tab-c .label { width: 334px; margin: 0 8px 0 12px; letter-spacing: .05px; -webkit-mask-image: linear-gradient(90deg, #000 280px, transparent 345px); mask-image: linear-gradient(90deg, #000 280px, transparent 345px); }
.newtab { width: 28px; height: 28px; margin: 19px 0 0 18px; }

.toolbar { height: 80px; display: flex; align-items: center; background: #f9f9fb; padding-left: 6px; }
.back { width: 68px; height: 68px; display: grid; place-items: center; border: 2px solid #b4b4b7; border-radius: 50%; background: #fdfdfe; }
.fwd { width: 32px; height: 28px; margin-left: 16px; }
.reload { width: 32px; height: 30px; margin-left: 33px; }
.home { width: 32px; height: 32px; margin-left: 31px; }
.urlbar { width: 1570px; height: 61px; margin-left: 202px; padding-left: 16px; display: flex; align-items: center; background: #fff; border: 2px solid #bcbcbe; border-radius: 7px; box-shadow: 0 2px 6px rgba(0,0,0,.06); }
.shield { width: 25px; height: 28px; }
.rule { width: 2px; height: 42px; background: #d3d3d5; margin-left: 15px; }
.lock { width: 28px; height: 28px; margin-left: 15px; }
.url { width: 1279px; margin-left: 17px; font-size: 28px; letter-spacing: -.5px; padding-top: 1px; }
.qr { width: 30px; height: 30px; }
.qr + .rule { margin-left: 13px; }
.dots { width: 34px; height: 8px; margin-left: 24px; }
.star { width: 33px; height: 33px; margin-left: 21px; }
.down { width: 26px; height: 32px; margin-left: 205px; }
.burger { width: 28px; height: 24px; margin-left: 692px; }

.bookmarks { height: 58px; display: flex; align-items: center; background: #f9f9fb; border-bottom: 2px solid #e0e0e2; padding: 0 25px 0 24px; }
.bookmarks a { display: flex; align-items: center; gap: 8px; }
.bookmarks a > svg { width: 32px; height: 32px; }
.bookmarks a > span:last-child { padding-bottom: 2px; }
.bookmarks .tw { letter-spacing: .35px; }
.gray svg { color: #4e4e52; }
.bookmarks .mobile { margin-left: auto; padding-bottom: 4px; gap: 7px; }
.bookmarks .mobile svg { width: 19px; height: 26px; margin-top: 8px; }
.du { font: bold 11px "Liberation Sans", sans-serif; fill: #fff; text-anchor: middle; }

.body { display: flex; height: 1590px; }
.sidebar { width: 432px; background: #d5dce5; border-right: 2px solid #b9c1cc; }
.side-head { height: 86px; display: flex; align-items: center; padding-left: 32px; font-size: 31.700px; background: linear-gradient(100deg, #dcdcdd, #e2e2e3); border-bottom: 2px solid #c8c9cc; }
.side-head span { padding-bottom: 3px; }
.tree { width: 28px; height: 28px; margin-right: 18px; }
.chev { width: 18px; height: 11px; margin-left: 13px; }
.side-x { width: 19px; height: 19px; margin-left: auto; margin-right: 33px; color: #1a1a1a; }
.row { height: 48px; display: flex; align-items: center; padding: 2px 6px 0 36px; }
.row .txt { margin-left: 6px; overflow: hidden; line-height: 36px; }
.row.current { height: 49px; padding: 1px 7px 0 36px; background: linear-gradient(#9eadcd, #7587af); border-top: 2px solid #8f9dbd; }
.current .fav { color: #000; }
.current .txt { color: #fff; font-size: 22.500px; text-shadow: 2px 2px 2px #3c4663; letter-spacing: .3px; flex: 1; }
.pill { width: 26px; height: 26px; }
.row.last { height: 49px; padding-top: 1px; }
.last .fav { color: #24292e; }
.row .fade { width: 350px; flex: none; letter-spacing: .05px; -webkit-mask-image: linear-gradient(90deg, #000 310px, transparent 352px); mask-image: linear-gradient(90deg, #000 310px, transparent 352px); }
.add { display: flex; justify-content: center; color: #3c3c40; }
.add svg { width: 28px; height: 28px; }
.page { flex: 1; padding: 16px; font-family: "Liberation Sans", Arial, sans-serif; color: #000; background: #fff; }
h1 { margin: 0 0 43px; font-size: 64px; line-height: 74px; letter-spacing: -.15px; }
h2 { margin: 0 0 40px; font-size: 48px; line-height: 56px; letter-spacing: .06px; }
.dock-shade { position: absolute; left: 280px; bottom: 0; width: 2440px; height: 90px; background: linear-gradient(transparent, rgba(0,0,0,.045) 60%, rgba(0,0,0,.08)); -webkit-mask-image: linear-gradient(90deg, transparent, #000 120px, #000 2320px, transparent); mask-image: linear-gradient(90deg, transparent, #000 120px, #000 2320px, transparent); }

/* Notification banner */
.notice { position: absolute; left: 2272px; top: 84px; width: 688px; height: 126px; border-radius: 17px; display: flex; background: linear-gradient(#e0e0e1, #ebebec); box-shadow: 0 0 2px rgba(0,0,0,.45), 0 8px 24px rgba(0,0,0,.2); color: #2f2f31; }
.n-bat { width: 46px; height: 64px; margin: 29px 0 0 27px; }
.n-text { width: 444px; margin-left: 29px; padding-top: 12px; }
.n-text strong { display: block; font-size: 24.200px; line-height: 34px; font-weight: 700; }
.n-text p { margin: 3px 0 0; line-height: 28.500px; font-size: 22.150px; white-space: nowrap; }
.n-close { flex: 1; border-left: 2px solid #c9c9cb; font-size: 24.500px; font-weight: 500; color: #757577; line-height: 127px; padding-right: 2px; text-align: center; }

/* Dock */
.behind { position: absolute; left: 321px; top: 1840px; width: 40px; height: 67px; background: #0e0f11; border-radius: 0 0 0 10px; }
.dock { position: absolute; left: 342px; top: 1840px; width: 2316px; height: 160px; padding-left: 8px; display: flex; border-radius: 14px 14px 0 0;
  background:
    linear-gradient(90deg, rgba(100,109,136,0) 1860px, rgba(100,109,136,.95) 2020px, #666f88),
    radial-gradient(ellipse 260px 170px at 0 0, rgba(66,70,78,.8), rgba(66,70,78,0)),
    linear-gradient(#acaeb2, #8f95a3 50%, #6f7893); }
.dock svg { width: 136px; height: 160px; position: relative; filter: drop-shadow(0 2px 2px rgba(0,0,0,.25)); }
.on { background: radial-gradient(circle at 68px 152px, #050510 3.600px, transparent 4.400px); }
.sep { width: 2px; height: 120px; margin: 20px 28px 0 30px; background: #48506a; }
.sep.short { height: 80px; margin: 40px 28px 0 32px; background: #656c7d; }
.badge { font: 30px Inter, sans-serif; fill: #fff; text-anchor: middle; }
.office { font: 600 43px "Open Sans", sans-serif; fill: #fff; text-anchor: middle; }
.lift { filter: drop-shadow(0 2px 3px rgba(0,0,0,.4)); }
.term { font: bold 27px "DejaVu Sans Mono", monospace; fill: #fff; }
```
